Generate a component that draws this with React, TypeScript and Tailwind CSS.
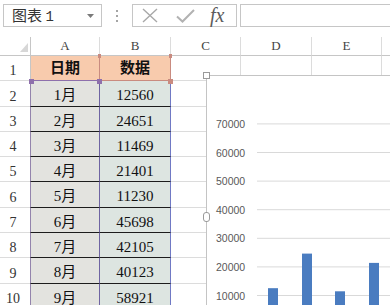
import React from 'react';

const data: [string, string][] = [
  ['1月', '12560'],
  ['2月', '24651'],
  ['3月', '11469'],
  ['4月', '21401'],
  ['5月', '11230'],
  ['6月', '45698'],
  ['7月', '42105'],
  ['8月', '40123'],
  ['9月', '58921'],
];

// the sixth column runs off the right edge; its letter is outside the view
const cols = ['A', 'B', 'C', 'D', 'E', ''];

// y position (chart coords) of a value on the axis
const yOf = (v: number) => 219.5 - (v - 10000) * 0.00286;

const Chart = () => {
  const ticks = [70000, 60000, 50000, 40000, 30000, 20000, 10000];
  const bars = [
    { x: 61, v: 12560 },
    { x: 95, v: 24651 },
    { x: 128, v: 11469 },
    { x: 162, v: 21401 },
  ];
  return (
    <div className="absolute left-[206px] top-[38px] w-[200px] h-[260px] border border-[#c4c4c4] bg-white">
      <svg width="190" height="250" className="block">
        {ticks.map((t) => (
          <g key={t}>
            <line x1="50" x2="190" y1={yOf(t)} y2={yOf(t)} stroke="#d9d9d9" strokeWidth="1" />
            <text
              x="9"
              y={yOf(t) + 4}
              fontSize="10.5"
              fill="#595959"
              fontFamily="'Liberation Sans', Arial, sans-serif"
            >
              {t}
            </text>
          </g>
        ))}
        {bars.map((b) => (
          <rect key={b.x} x={b.x} y={yOf(b.v)} width="10" height={260 - yOf(b.v)} fill="#4a7cc0" />
        ))}
      </svg>
    </div>
  );
};

export default function App() {
  const serif = "font-['Liberation_Serif','Noto_Sans_CJK_SC',serif]";
  return (
    <div className="w-[390px] h-[305px] overflow-hidden bg-white relative">
      {/* toolbar */}
      <div className="h-[37px] flex items-start pt-[4px] pl-[3px]">
        <div className="w-[99px] h-[23px] border border-[#c6c6c6] flex items-center pl-[8px] pr-[7px] justify-between">
          <span className="text-[15px] text-[#333] font-['Noto_Sans_CJK_SC',sans-serif] leading-none">
            图表 <span className="font-['Liberation_Mono',monospace] text-[14px]">1</span>
          </span>
          <svg width="7" height="4" viewBox="0 0 7 4">
            <path d="M0 0H7L3.5 4Z" fill="#7a7a7a" />
          </svg>
        </div>
        <div className="w-[30px] h-[23px] flex flex-col items-center justify-center gap-[3px]">
          <span className="w-[2px] h-[2px] bg-[#a5a5a5]" />
          <span className="w-[2px] h-[2px] bg-[#a5a5a5]" />
          <span className="w-[2px] h-[2px] bg-[#a5a5a5]" />
        </div>
        <div className="w-[105px] h-[23px] border border-[#c6c6c6] flex items-center">
          <svg width="16" height="15" viewBox="0 0 16 15" className="ml-[9px]">
            <path d="M1 1L15 14M15 1L1 14" stroke="#a8a8a8" strokeWidth="1.4" fill="none" />
          </svg>
          <svg width="19" height="14" viewBox="0 0 19 14" className="ml-[18px]">
            <path d="M1 7.5L6.5 12.5L18 1" stroke="#b2b2b2" strokeWidth="2" fill="none" />
          </svg>
          <span className="ml-[15px] text-[20px] italic text-[#5c5c5c] font-['Liberation_Serif',serif] leading-none -mt-[2px]">
            fx
          </span>
        </div>
        <div className="ml-[3px] flex-1 h-[23px] border-y border-l border-[#c6c6c6]" />
      </div>

      {/* sheet */}
      <div className="relative">
        <div className={`grid grid-cols-[31px_69px_71px_70px_71px_70px_70px] w-max ${serif}`}>
          {/* header row */}
          <div className="h-[19px] border-r border-b border-[#c6c6c6] relative">
            <svg width="8" height="9" className="absolute left-[20px] top-[6px]">
              <path d="M8 0V9H0Z" fill="#d7d7d7" />
            </svg>
          </div>
          {cols.map((c, i) => (
            <div
              key={i}
              className="h-[19px] border-r border-b border-r-[#dcdcdc] border-b-[#c6c6c6] flex items-center justify-center text-[13px] text-[#444]"
            >
              {c}
            </div>
          ))}

          {/* row 1 */}
          <div className="h-[25.3px] border-r border-b border-r-[#c6c6c6] border-b-[#dcdcdc] flex items-end justify-center pr-[4px] pb-[2px] text-[14px] text-[#333] leading-[14px]">
            1
          </div>
          <div className="h-[25.3px] bg-[#f8cbad] border-b border-r border-b-[#8e70ac] border-r-[#c98b80] flex items-center justify-center text-[15px] font-bold text-[#111]">
            日期
          </div>
          <div className="h-[25.3px] bg-[#f8cbad] border-b border-r border-[#c98b80] flex items-center justify-center text-[15px] font-bold text-[#111]">
            数据
          </div>
          {[0, 1, 2, 3].map((k) => (
            <div key={k} className="h-[25.3px] border-r border-b border-[#dcdcdc]" />
          ))}

          {/* data rows */}
          {data.map(([m, v], i) => (
            <React.Fragment key={m}>
              <div className="h-[25.3px] border-r border-b border-r-[#c6c6c6] border-b-[#dcdcdc] flex items-end justify-center pr-[4px] pb-[2px] text-[14px] text-[#333] leading-[14px]">
                {i + 2}
              </div>
              <div className="h-[25.3px] bg-[#e3e3df] border-l border-r border-b border-l-[#9384ac] border-r-[#6f64a2] border-b-[#1c1c1c] -ml-px flex items-center justify-center pt-[4px] text-[15px] text-[#111]">
                {m}
              </div>
              <div className="h-[25.3px] bg-[#dde5e1] border-r border-b border-r-[#7079c4] border-b-[#1c1c1c] flex items-center justify-center pt-[4px] text-[15px] text-[#111]">
                {v}
              </div>
              {[0, 1, 2, 3].map((k) => (
                <div key={k} className="h-[25.3px] border-r border-b border-[#dcdcdc]" />
              ))}
            </React.Fragment>
          ))}
        </div>

        {/* range handles */}
        <span className="absolute left-[29px] top-[42px] w-[5px] h-[5px] bg-[#8e70ac]" />
        <span className="absolute left-[97px] top-[42px] w-[5px] h-[5px] bg-[#8e70ac]" />
        <span className="absolute left-[168px] top-[42px] w-[5px] h-[5px] bg-[#c98b80]" />
        <span className="absolute left-[98px] top-[17px] w-[3px] h-[4px] bg-[#c98b80]" />
        <span className="absolute left-[169px] top-[17px] w-[3px] h-[4px] bg-[#c98b80]" />

        <Chart />

        {/* chart handles */}
        <span className="absolute left-[203px] top-[35px] w-[7px] h-[7px] bg-white border border-[#9a9a9a]" />
        <span className="absolute left-[203px] top-[175px] w-[7px] h-[10px] rounded-[3px] bg-white border border-[#9a9a9a]" />
      </div>
    </div>
  );
}
